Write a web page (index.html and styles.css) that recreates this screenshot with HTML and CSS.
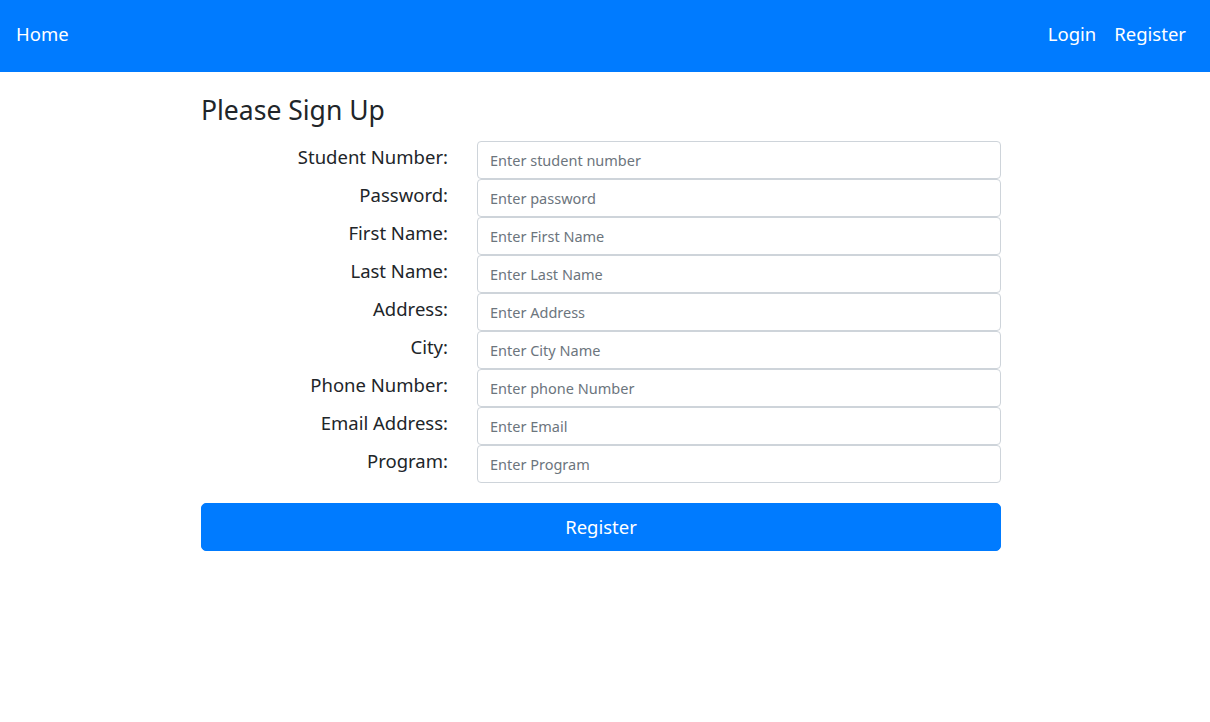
FILE: index.html
```html
<!DOCTYPE html>
<html lang="en">
<head>
<meta charset="utf-8">
<title>Please Sign Up</title>
<link rel="stylesheet" href="styles.css">
</head>
<body>
<nav class="navbar">
  <a class="brand" href="#">Home</a>
  <div class="nav-links">
    <a class="nav-link" href="#">Login</a>
    <a class="nav-link" href="#">Register</a>
  </div>
</nav>
<main class="container">
  <h3 class="title">Please Sign Up</h3>
  <form class="form">
    <div class="row"><label class="label">Student Number:</label><input class="input" type="text" placeholder="Enter student number"></div>
    <div class="row"><label class="label">Password:</label><input class="input" type="password" placeholder="Enter password"></div>
    <div class="row"><label class="label">First Name:</label><input class="input" type="text" placeholder="Enter First Name"></div>
    <div class="row"><label class="label">Last Name:</label><input class="input" type="text" placeholder="Enter Last Name"></div>
    <div class="row"><label class="label">Address:</label><input class="input" type="text" placeholder="Enter Address"></div>
    <div class="row"><label class="label">City:</label><input class="input" type="text" placeholder="Enter City Name"></div>
    <div class="row"><label class="label">Phone Number:</label><input class="input" type="text" placeholder="Enter phone Number"></div>
    <div class="row"><label class="label">Email Address:</label><input class="input" type="text" placeholder="Enter Email"></div>
    <div class="row"><label class="label">Program:</label><input class="input" type="text" placeholder="Enter Program"></div>
    <button class="btn" type="button">Register</button>
  </form>
</main>
</body>
</html>
```
FILE: styles.css
```css
* { box-sizing: border-box; }
body {
  margin: 0;
  font-family: "Noto Sans", "Open Sans", sans-serif;
  color: #212529;
  background: #fff;
}
.navbar {
  height: 72px;
  background: #007bff;
  display: flex;
  align-items: center;
  justify-content: space-between;
  padding: 0 16px 5px 16px;
}
.brand, .nav-link {
  color: #fff;
  text-decoration: none;
  font-size: 18.5px;
}
.nav-links { display: flex; }
.nav-link { padding: 0 9px; }
.nav-link:last-child { padding-right: 8px; }
.container {
  width: 800px;
  margin-left: 201px;
}
.title {
  font-size: 26.5px;
  font-weight: 400;
  line-height: 34px;
  margin: 0 0 14px 0;
  padding-top: 21px;
}
.form { display: flex; flex-direction: column; }
.row {
  display: flex;
  align-items: flex-start;
  height: 38px;
}
.label {
  width: 247px;
  text-align: right;
  font-size: 18.5px;
  line-height: 32px;
  flex: none;
}
.input {
  margin-left: 29px;
  width: 524px;
  height: 38px;
  border: 1px solid #ced4da;
  border-radius: 4px;
  padding: 6px 12px;
  font-family: inherit;
  font-size: 14.5px;
  color: #495057;
}
.input::placeholder { color: #6c757d; opacity: 1; }
.btn {
  margin-top: 20px;
  width: 800px;
  height: 48px;
  background: #007bff;
  border: 1px solid #007bff;
  border-radius: 5px;
  color: #fff;
  font-family: inherit;
  font-size: 18.5px;
  padding: 0 0 2px 0;
}
```
